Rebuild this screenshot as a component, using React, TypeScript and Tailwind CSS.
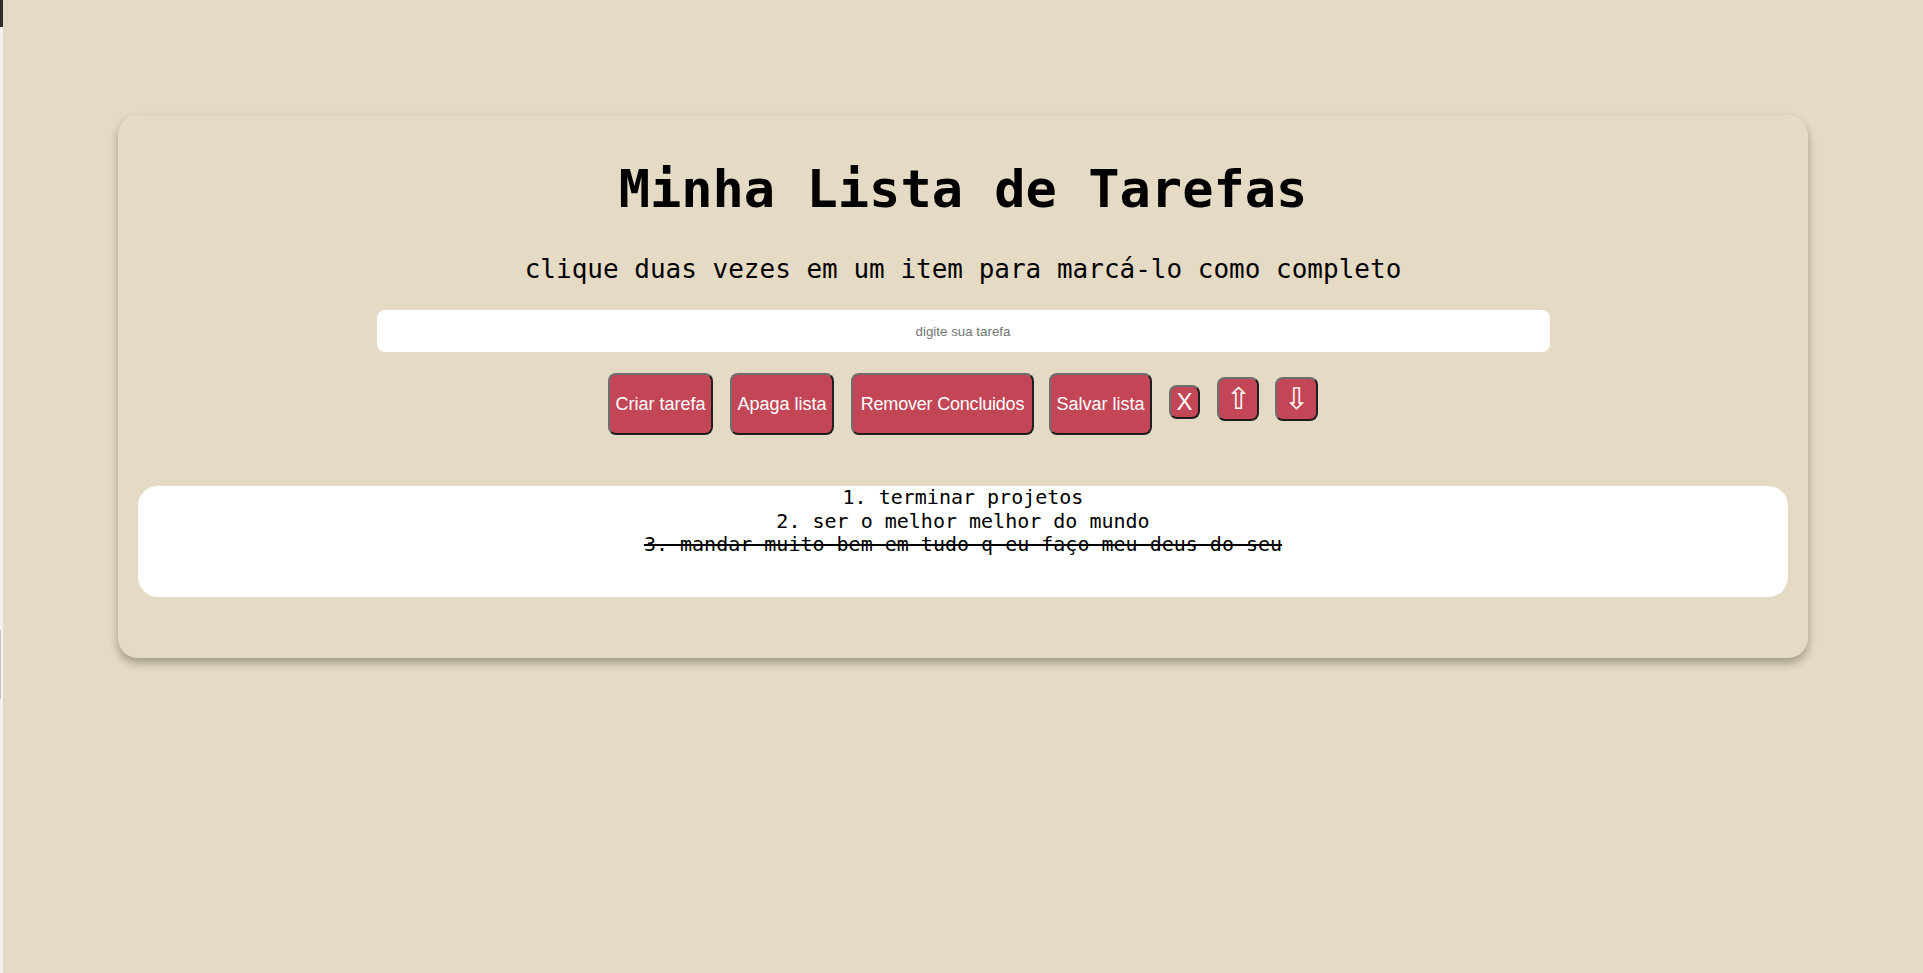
import React from "react";

const btnBase =
  "flex items-center justify-center whitespace-nowrap bg-[#c34656] text-white rounded-[8px] border-2 border-t-[#6e6e6e] border-l-[#6e6e6e] border-r-[#1e1e1e] border-b-[#1e1e1e] font-['Liberation_Sans',Arial,sans-serif]";

export default function App() {
  return (
    <div className="flex w-full min-h-[973px] bg-[#e5dbc4]">
      <div className="w-[3px] shrink-0 bg-[#f1f1f1] flex flex-col">
        <div className="h-[27px] bg-[#2d2d2d]" />
        <div className="h-[603px]" />
        <div className="h-[69px] w-[1px] bg-[#c4c4c4]" />
      </div>
      <div className="flex-1 pt-[115px]">
        <div className="mx-auto w-[1690px] bg-[#e5dbc4] rounded-[20px] shadow-[0_5px_10px_rgba(0,0,0,0.3)] px-[20px] pt-[44px] pb-[61px] flex flex-col items-center">
          <h1 className="text-[52px] leading-[60px] font-bold text-black font-['DejaVu_Sans_Mono',monospace] text-center">
            Minha Lista de Tarefas
          </h1>
          <p className="mt-[35px] text-[26px] leading-[30px] text-black font-['DejaVu_Sans_Mono',monospace] text-center">
            clique duas vezes em um item para marcá-lo como completo
          </p>
          <input
            type="text"
            placeholder="digite sua tarefa"
            className="mt-[26px] w-[1173px] h-[42px] bg-white rounded-[8px] text-center text-[13.33px] font-['Liberation_Sans',Arial,sans-serif] placeholder:text-[#757575] outline-none"
          />
          <div className="mt-[21px] h-[62px] flex items-start">
            <button className={`${btnBase} h-[62px] w-[105px] text-[18px]`}>Criar tarefa</button>
            <button className={`${btnBase} ml-[17px] h-[62px] w-[104px] text-[18px]`}>Apaga lista</button>
            <button className={`${btnBase} ml-[17px] h-[62px] w-[183px] text-[18px] tracking-[-0.2px]`}>Remover Concluidos</button>
            <button className={`${btnBase} ml-[15px] h-[62px] w-[103px] text-[18px]`}>Salvar lista</button>
            <button className={`${btnBase} ml-[17px] mt-[12px] h-[34px] w-[31px] text-[24px] leading-none`}>X</button>
            <button className={`${btnBase} ml-[17px] mt-[4px] h-[44px] w-[42px] text-[30px] leading-none font-['DejaVu_Sans',sans-serif]`}>⇧</button>
            <button className={`${btnBase} ml-[16px] mt-[4px] h-[44px] w-[43px] text-[30px] leading-none font-['DejaVu_Sans',sans-serif]`}>⇩</button>
          </div>
          <div className="mt-[51px] w-full bg-white rounded-[20px] pb-[40px]">
            <ol className="text-[20px] leading-[23.5px] text-black font-['DejaVu_Sans_Mono',monospace] text-center">
              <li>1. terminar projetos</li>
              <li>2. ser o melhor melhor do mundo</li>
              <li className="line-through">3. mandar muito bem em tudo q eu faço meu deus do seu</li>
            </ol>
          </div>
        </div>
      </div>
    </div>
  );
}
